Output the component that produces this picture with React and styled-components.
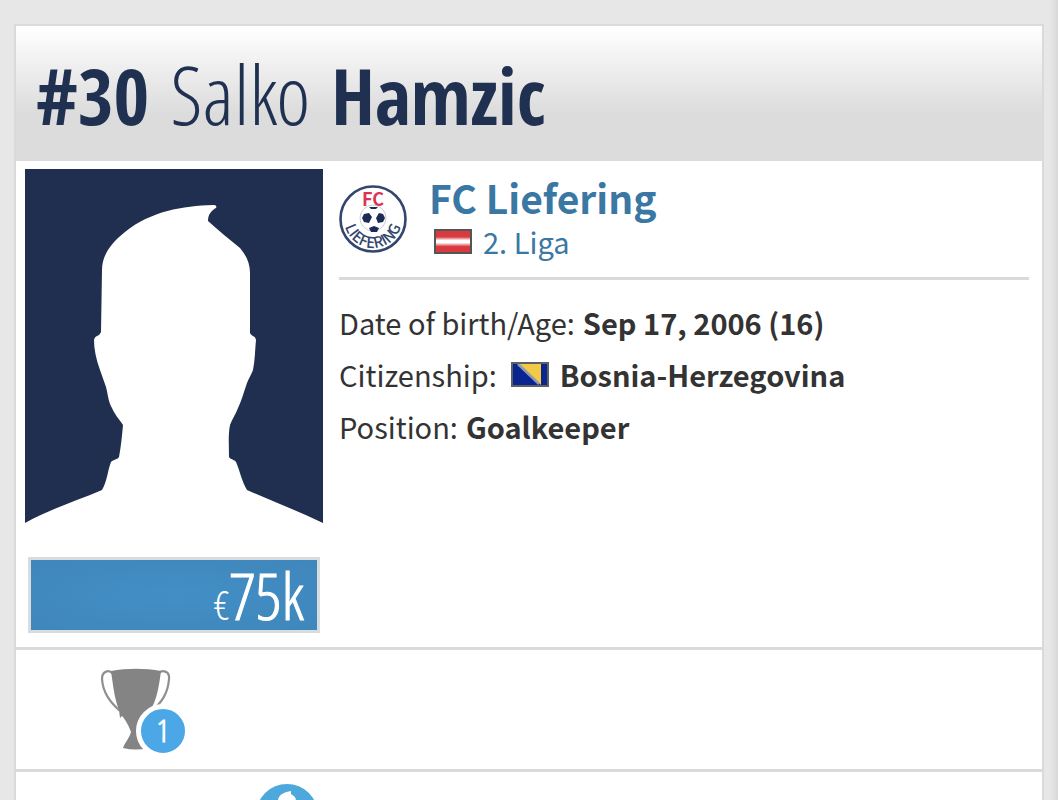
import React from "react";
import styled, { createGlobalStyle } from "styled-components";

const player = {
  number: "#30",
  firstName: "Salko",
  lastName: "Hamzic",
  club: "FC Liefering",
  league: "2. Liga",
  born: "Sep 17, 2006 (16)",
  citizenship: "Bosnia-Herzegovina",
  position: "Goalkeeper",
  value: "75k",
  trophies: 1,
};

export default function App() {
  return (
    <>
      <GlobalStyle />
      <Card>
        <Header>
          <Name>
            <b>{player.number}</b>
            <FirstName>{player.firstName}</FirstName>
            <b>{player.lastName}</b>
          </Name>
        </Header>

        <Profile>
          <Aside>
            <Portrait />
            <MarketValue href="#market-value">
              <Currency>€</Currency>
              {player.value}
            </MarketValue>
          </Aside>

          <Info>
            <Club>
              <Emblem />
              <ClubText>
                <ClubName href="#club">{player.club}</ClubName>
                <League href="#league">
                  <AustriaFlag />
                  {player.league}
                </League>
              </ClubText>
            </Club>

            <Details>
              <Row>
                <dt>Date of birth/Age:</dt>
                <dd>{player.born}</dd>
              </Row>
              <Row>
                <dt>Citizenship:</dt>
                <dd>
                  <BosniaFlag />
                  {player.citizenship}
                </dd>
              </Row>
              <Row>
                <dt>Position:</dt>
                <dd>{player.position}</dd>
              </Row>
            </Details>
          </Info>
        </Profile>

        <TrophyRow>
          <TrophyLink href="#trophies" aria-label="Trophies">
            <Trophy />
            <Badge>{player.trophies}</Badge>
          </TrophyLink>
        </TrophyRow>

        <AgentRow>
          <AgentIcon />
        </AgentRow>
      </Card>
    </>
  );
}

function Portrait() {
  return (
    <PortraitSvg viewBox="0 0 298 354" role="img" aria-label="Player portrait">
      <rect width="298" height="354" fill="#202f4f" />
      <path
        fill="#fff"
        d="M0 354C25 340 51 332 77 321C82 313 83 300 86 293C89 290 92 291 94 288C96 277 97 267 98 256C94 250 90 246 87 239C83 232 83 225 81 218L75 201C71 190 69 180 69 171C70 166 74 168 76 163L77 101C77 87 85 75 100 63C126 42 158 37 188 36C191 36 192 37 191 39C187 41 183 45 183 52C194 62 205 71 215 79C221 86 225 94 225 104L225 164C227 168 230 166 231 171C230 181 230 191 228 201C226 206 224 209 222 214C219 222 217 231 213 239C211 245 207 250 205 256C203 266 204 277 204 288C206 291 209 290 211 293C215 302 217 313 222 321C247 332 273 342 298 354Z"
      />
    </PortraitSvg>
  );
}

function Emblem() {
  return (
    <EmblemSvg viewBox="0 0 68 68" role="img" aria-label="FC Liefering">
      <circle cx="34" cy="34" r="32.5" fill="#fff" stroke="#34466d" strokeWidth="2.6" />
      <circle cx="34" cy="33" r="13" fill="#fff" stroke="#c9cdd6" strokeWidth="1" />
      <g fill="#1b2b55">
        <path d="M25 29l5-1 3 4-3 6-5-1-2-4z" />
        <path d="M40 28l4 1 2 4-2 4-5 1-2-5z" />
        <path d="M30 43l5-2 5 2-2 4h-6z" />
        <path d="M30 22h9l-2 2h-5z" />
      </g>
      <text x="34" y="21" textAnchor="middle" fontSize="18" fontWeight="700" fill="#dc3355">
        FC
      </text>
      <path id="emblem-arc" d="M5 34A29 29 0 0 0 63 34" fill="none" />
      <text fontSize="15" fontWeight="500" fill="#34466d">
        <textPath href="#emblem-arc" startOffset="50%" textAnchor="middle">
          LIEFERING
        </textPath>
      </text>
    </EmblemSvg>
  );
}

function AustriaFlag() {
  return (
    <FlagSvg viewBox="0 0 38 25" role="img" aria-label="Austria">
      <defs>
        <linearGradient id="austria" x1="0" y1="0" x2="0" y2="1">
          <stop offset="0.3" stopColor="#d93a3f" />
          <stop offset="0.45" stopColor="#fff" />
          <stop offset="0.55" stopColor="#fff" />
          <stop offset="0.72" stopColor="#d93a3f" />
        </linearGradient>
      </defs>
      <rect x="1" y="1" width="36" height="23" fill="url(#austria)" stroke="#555" strokeWidth="2" />
    </FlagSvg>
  );
}

function BosniaFlag() {
  return (
    <FlagSvg viewBox="0 0 38 25" role="img" aria-label="Bosnia-Herzegovina">
      <rect width="38" height="25" fill="#0b2590" />
      <path d="M8 2H30V23Z" fill="#f2ca45" />
      <path d="M7 2L28 22" stroke="#8f9cb0" strokeWidth="2.5" />
      <rect x="1" y="1" width="36" height="23" fill="none" stroke="#5c5f66" strokeWidth="2" />
    </FlagSvg>
  );
}

function Trophy() {
  return (
    <TrophySvg viewBox="0 0 72 82" aria-hidden="true">
      <g fill="none" stroke="#8f8f8f" strokeWidth="2.2">
        <path d="M13 6C9 1 2 3 2 11C3 25 10 34 20 43" />
        <path d="M58 6C62 1 70 3 69 11C68 25 62 34 52 43" />
      </g>
      <path
        fill="#848484"
        d="M11 3C27 0 45 0 61 3C59 18 57 32 50 43C46 51 41 57 41 64C42 71 46 74 48 80Q36 83 23 80C25 74 29 71 31 64C29 58 25 51 22 48L20 50L19 42C14 29 13 16 11 3Z"
      />
    </TrophySvg>
  );
}

function AgentIcon() {
  return (
    <AgentSvg viewBox="0 0 62 62" role="img" aria-label="Player agent">
      <circle cx="31" cy="31" r="31" fill="#4ea8dc" />
      <path
        fill="#fff"
        d="M22 16C23 10 29 8 35 7L35 10C38 12 40 13 40 17V25C39 31 37 32 36 36L37 42L50 48C42 60 20 60 12 48L25 42V36C23 32 22 30 22 25Z"
      />
    </AgentSvg>
  );
}

const GlobalStyle = createGlobalStyle`
  * {
    box-sizing: border-box;
  }

  body {
    margin: 0;
    padding: 24px 14px;
    background: linear-gradient(to left, #d9d9d9, #e7e7e7 8px);
    color: #333;
    font-family: "Noto Sans CJK SC", "Open Sans", sans-serif;
    font-size: 29px;
  }

  a {
    color: #3a77a3;
    text-decoration: none;
  }
`;

const condensed = `"Open Sans Condensed", "Roboto Condensed", sans-serif`;
const condensedLight = `"Open Sans Condensed Light", "Roboto Condensed Light", sans-serif`;

const Card = styled.main`
  background: #fff;
  border: 2px solid #dadada;
`;

const Header = styled.header`
  display: flex;
  align-items: center;
  min-height: 135px;
  padding: 2px 20px 0;
  background: linear-gradient(#fff, #dcdcdc 65%);
`;

const Name = styled.h1`
  display: flex;
  align-items: baseline;
  gap: 21px;
  margin: 0;
  color: #1f3050;
  font-family: ${condensed};
  font-size: 77px;
  line-height: 96px;
`;

const FirstName = styled.span`
  font-family: ${condensedLight};
  font-size: 82px;
  font-weight: 300;
`;

const Profile = styled.section`
  display: flex;
  gap: 16px;
  padding: 8px 13px 14px 9px;
`;

const Aside = styled.div`
  flex: none;
  width: 298px;
`;

const PortraitSvg = styled.svg`
  display: block;
  width: 100%;
`;

const MarketValue = styled.a`
  display: flex;
  justify-content: flex-end;
  align-items: baseline;
  height: 76px;
  margin: 34px 3px 0;
  padding: 0 13px;
  border: 3px solid #d9dcdf;
  background: radial-gradient(#428fc6, #3f86bb);
  color: #fff;
  font-family: ${condensedLight};
  font-size: 65px;
  font-weight: 300;
  line-height: 71px;
  -webkit-text-stroke: 1px #fff;
`;

const Currency = styled.span`
  font-size: 40px;
  -webkit-text-stroke: 0;
`;

const Info = styled.div`
  flex: 1;
`;

const Club = styled.div`
  display: flex;
  gap: 22px;
  height: 111px;
  padding-top: 6px;
  border-bottom: 3px solid #dadada;
`;

const EmblemSvg = styled.svg`
  flex: none;
  width: 68px;
  height: 68px;
  margin-top: 10px;
`;

const ClubText = styled.div`
  display: flex;
  flex-direction: column;
`;

const ClubName = styled.a`
  font-size: 39px;
  font-weight: 700;
  line-height: 44px;
`;

const League = styled.a`
  display: flex;
  align-items: center;
  gap: 11px;
  padding-left: 5px;
  line-height: 44px;
`;

const FlagSvg = styled.svg`
  flex: none;
  width: 38px;
  height: 25px;
`;

const Details = styled.dl`
  margin: 16px 0 0;
`;

const Row = styled.div`
  display: flex;
  gap: 8px;
  line-height: 52px;

  dd {
    display: flex;
    align-items: center;
    gap: 11px;
    margin: 0;
    font-weight: 700;
  }

  svg {
    margin-left: 6px;
  }
`;

const TrophyRow = styled.section`
  padding: 18px 84px;
  border-top: 3px solid #dadada;
`;

const TrophyLink = styled.a`
  position: relative;
  display: block;
  width: 72px;
  height: 83px;
`;

const TrophySvg = styled.svg`
  display: block;
  width: 72px;
  height: 82px;
`;

const Badge = styled.span`
  position: absolute;
  left: 36px;
  top: 36px;
  width: 54px;
  height: 54px;
  border: 5px solid #fff;
  border-radius: 50%;
  background: #4ba7e5;
  color: #fff;
  font-family: ${condensedLight};
  font-size: 32px;
  line-height: 42px;
  text-align: center;
  -webkit-text-stroke: 1px #fff;
`;

const AgentRow = styled.section`
  padding: 12px 240px;
  border-top: 3px solid #dadada;
`;

const AgentSvg = styled.svg`
  display: block;
  width: 62px;
  height: 62px;
`;
